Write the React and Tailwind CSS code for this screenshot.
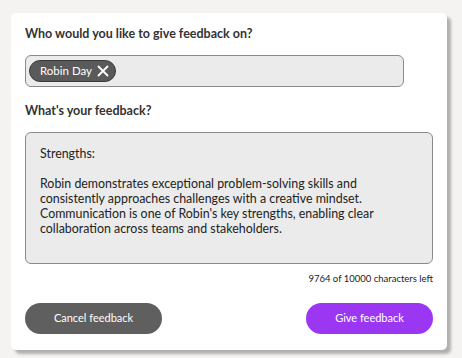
import React, { useState } from 'react';

const initialText = `Strengths:

Robin demonstrates exceptional problem-solving skills and consistently approaches challenges with a creative mindset. Communication is one of Robin's key strengths, enabling clear collaboration across teams and stakeholders.`;

const App = () => {
    const [text, setText] = useState(initialText);
    const [people, setPeople] = useState(['Robin Day']);

    return (
        <div className="w-[462px] h-[358px] bg-[#f4f3f1] pt-[13px] pl-[11px] font-['Lato',sans-serif] text-[#333]">
            <div className="w-[436px] h-[337px] bg-white rounded-[5px] shadow-[4px_4px_3px_rgba(0,0,0,0.28)] pt-[12px] px-[14px] flex flex-col">
                {/* Who */}
                <h2 className="text-[12.5px] font-bold leading-[18px]">Who would you like to give feedback on?</h2>
                <div className="mt-[12px] w-[379px] h-[32px] bg-[#ebebeb] border border-[#8a8a8a] rounded-[6px] flex items-center px-[3px]">
                    {people.map((p) => (
                        <span key={p} className="h-[22px] flex items-center gap-[5px] bg-[#5a5a5a] border border-[#3a3a3a] rounded-full pl-[10px] pr-[6px] text-white text-[11.5px]">
                            {p}
                            <button onClick={() => setPeople(people.filter((x) => x !== p))} className="flex items-center">
                                <svg width="12" height="12" viewBox="0 0 12 12" stroke="white" strokeWidth="1.8" strokeLinecap="round">
                                    <path d="M1.5 1.5L10.5 10.5M10.5 1.5L1.5 10.5" />
                                </svg>
                            </button>
                        </span>
                    ))}
                </div>

                {/* Feedback */}
                <h2 className="mt-[15px] text-[12.5px] font-bold leading-[18px]">What's your feedback?</h2>
                <textarea
                    value={text}
                    onChange={(e) => setText(e.target.value)}
                    className="mt-[12px] w-[408px] h-[132px] resize-none bg-[#ebebeb] border border-[#8a8a8a] rounded-[6px] pt-[13px] px-[14px] text-[12.4px] leading-[15px] text-[#222] outline-none"
                />
                <p className="mt-[9px] w-[408px] text-right text-[9.5px] leading-[12px] text-[#222]">
                    9764 of 10000 characters left
                </p>

                {/* Actions */}
                <div className="mt-[18px] w-[408px] flex justify-between">
                    <button className="w-[137px] h-[31px] rounded-full bg-[#5f5f5f] text-white text-[11px]">Cancel feedback</button>
                    <button className="w-[127px] h-[31px] rounded-full bg-[#9b37f3] text-white text-[11px]">Give feedback</button>
                </div>
            </div>
        </div>
    );
};

export default App;
